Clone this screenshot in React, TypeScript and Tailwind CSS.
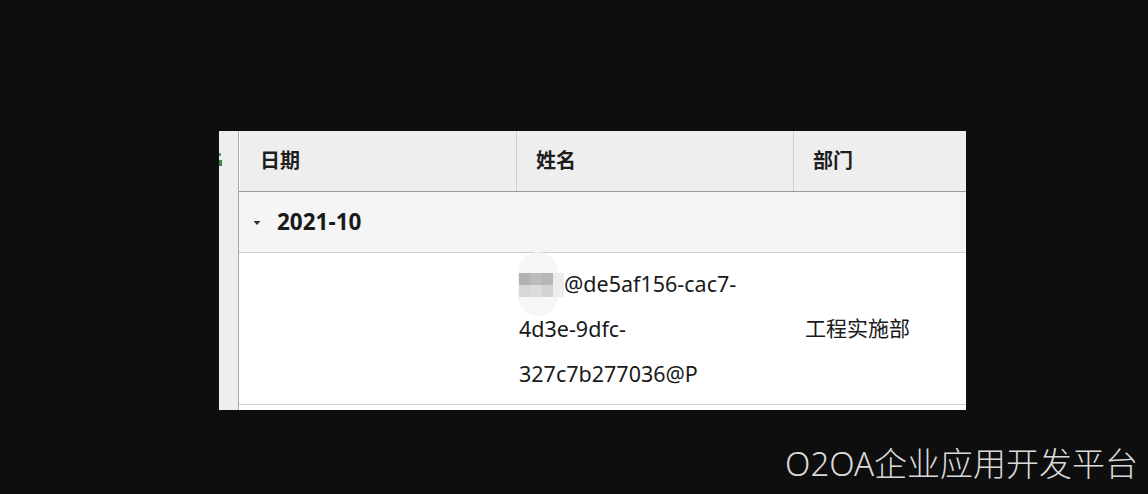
export default function App() {
  const font = { fontFamily: '"Noto Sans", "Noto Sans CJK SC", sans-serif' };
  return (
    <div className="w-[1148px] h-[494px] bg-[#0e0e0e] flex flex-col overflow-hidden" style={font}>
      <div className="ml-[219px] mt-[131px] w-[747px] h-[279px] flex overflow-hidden bg-white">
        {/* left strip */}
        <div className="w-[20px] shrink-0 bg-[#eeeeee] border-r border-[#a8a8a8] flex flex-col">
          <div className="h-[61px] pt-[19px]">
            <svg width="4" height="18" viewBox="0 0 4 18">
              <rect x="0" y="3" width="2" height="3" fill="#5a9a5a" />
              <rect x="0" y="10" width="3" height="6" fill="#3f8a3f" />
            </svg>
          </div>
        </div>

        <div className="flex-1 flex flex-col min-w-0">
          {/* header */}
          <div className="h-[61px] shrink-0 flex bg-[#eeeeee] border-b border-[#9a9a9a] text-[20px] font-bold text-[#1e1e1e]">
            <div className="w-[277px] flex items-center pl-[20px] border-l border-[#fafafa]">日期</div>
            <div className="w-[277px] flex items-center pl-[19px] border-l border-[#cfcfcf]">姓名</div>
            <div className="flex-1 flex items-center pl-[19px] border-l border-[#cfcfcf]">部门</div>
          </div>

          {/* group row */}
          <div className="h-[61px] shrink-0 flex items-center bg-[#f5f5f5] border-b border-[#cdcdcd] pl-[14px]">
            <svg width="8" height="6" viewBox="0 0 8 6" className="mt-[1px]">
              <path d="M0.5 1 L7.5 1 L4 5 Z" fill="#333" />
            </svg>
            <span className="ml-[16px] text-[22.5px] font-bold text-[#1a1a1a]">2021-10</span>
          </div>

          {/* data row */}
          <div className="h-[152px] shrink-0 flex border-b border-[#cdcdcd] text-[#1a1a1a]">
            <div className="w-[277px]" />
            <div className="w-[277px] flex flex-col justify-center pl-[3px] leading-[45px] text-[21.5px]">
              <div className="flex items-center">
                <span className="relative inline-flex w-[45px] h-[24px] mt-[3px]">
                  <span className="absolute left-[-1px] top-[-21px] w-[40px] h-[64px] rounded-full bg-[#f6f6f6]" />
                  <span className="relative grid grid-cols-4 grid-rows-2 w-[45px] h-[24px]">
                    <span className="bg-[#b2b2b2]" />
                    <span className="bg-[#bcbcbc]" />
                    <span className="bg-[#b6b6b6]" />
                    <span className="bg-[#ececec]" />
                    <span className="bg-[#d7d7d7]" />
                    <span className="bg-[#dcdcdc]" />
                    <span className="bg-[#d3d3d3]" />
                    <span className="bg-[#eeeeee]" />
                  </span>
                </span>
                <span>@de5af156-cac7-</span>
              </div>
              <div>4d3e-9dfc-</div>
              <div>327c7b277036@P</div>
            </div>
            <div className="flex-1 flex items-center pl-[12px] text-[21px]">工程实施部</div>
          </div>
        </div>
      </div>

      <div className="flex justify-end pr-[10px] mt-[34px]">
        <span className="text-[33px] leading-[40px] text-[#dadada] font-light">O2OA企业应用开发平台</span>
      </div>
    </div>
  );
}
